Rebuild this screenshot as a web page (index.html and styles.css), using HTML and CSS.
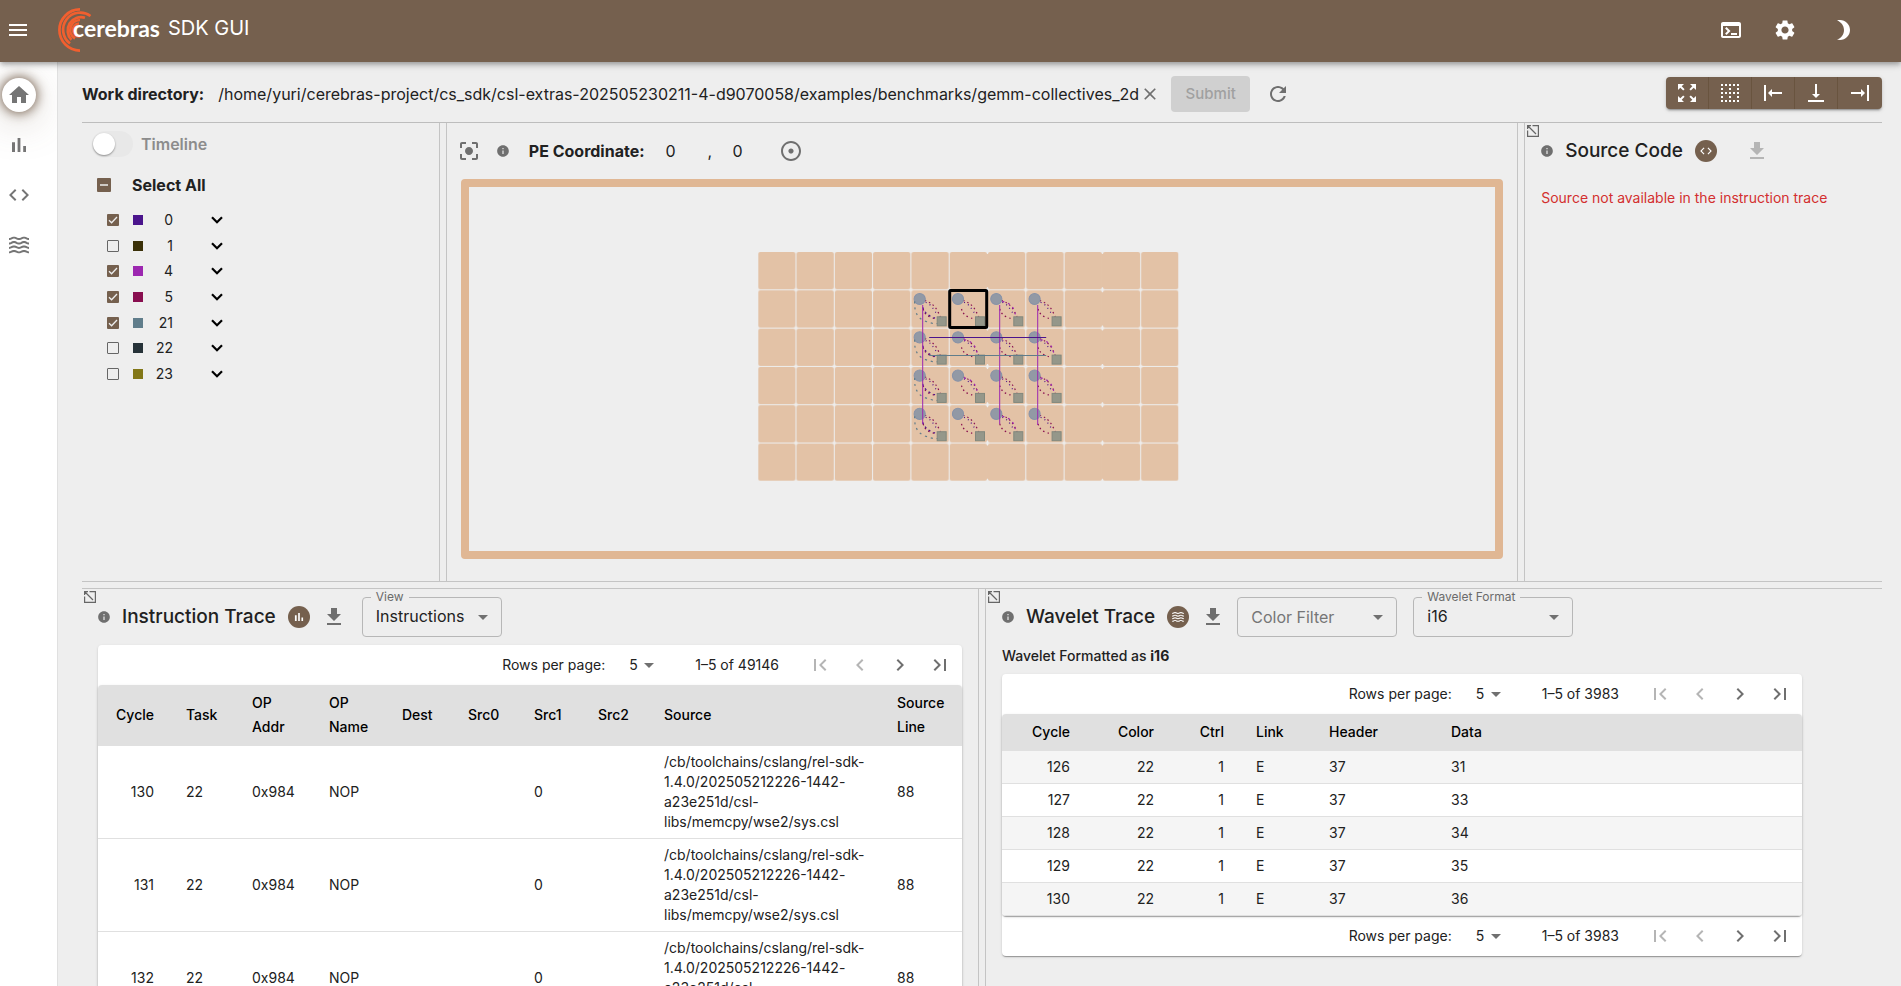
FILE: index.html
```html
<!DOCTYPE html>
<html lang="en">
<head>
<meta charset="utf-8">
<title>Cerebras SDK GUI</title>
<link rel="stylesheet" href="styles.css">
</head>
<body>
<svg class="defs" aria-hidden="true">
  <defs>
    <symbol id="i-menu" viewBox="0 0 24 24"><path d="M3 18h18v-2H3v2zm0-5h18v-2H3v2zm0-7v2h18V6H3z"/></symbol>
    <symbol id="i-home" viewBox="0 0 24 24"><path d="M10 20v-6h4v6h5v-8h3L12 3 2 12h3v8z"/></symbol>
    <symbol id="i-bars" viewBox="0 0 24 24"><path d="M5 9.2h3V19H5zM10.6 5h2.8v14h-2.8zm5.6 8H19v6h-2.8z"/></symbol>
    <symbol id="i-code" viewBox="0 0 24 24"><path d="M9.4 16.6 4.8 12l4.6-4.6L8 6l-6 6 6 6 1.4-1.4zm5.2 0 4.6-4.6-4.6-4.6L16 6l6 6-6 6-1.4-1.4z"/></symbol>
    <path id="wave" d="M17 16.99c-1.35 0-2.2.42-2.95.8-.65.33-1.18.6-2.05.6-.9 0-1.4-.25-2.05-.6-.75-.38-1.57-.8-2.95-.8s-2.2.42-2.95.8c-.65.33-1.17.6-2.05.6v1.95c1.35 0 2.2-.42 2.95-.8.65-.33 1.17-.6 2.05-.6s1.4.25 2.05.6c.75.38 1.57.8 2.95.8s2.2-.42 2.95-.8c.65-.33 1.18-.6 2.05-.6.9 0 1.4.25 2.05.6.75.38 1.58.8 2.95.8v-1.95c-.9 0-1.4-.25-2.05-.6-.75-.38-1.6-.8-2.95-.8z"/>
    <symbol id="i-waves" viewBox="0 0 24 24"><use href="#wave"/><use href="#wave" y="-4.45"/><use href="#wave" y="-8.9"/><use href="#wave" y="-13.35"/></symbol>
    <symbol id="i-terminal" viewBox="0 0 24 24"><path d="M20 4H4c-1.11 0-2 .9-2 2v12c0 1.1.89 2 2 2h16c1.1 0 2-.9 2-2V6c0-1.1-.89-2-2-2zm0 14H4V8h16v10zm-2-1h-6v-2h6v2zM7.5 17l-1.41-1.41L8.67 13l-2.59-2.59L7.5 9l4 4-4 4z"/></symbol>
    <symbol id="i-gear" viewBox="0 0 24 24"><path d="M19.14 12.94c.04-.3.06-.61.06-.94 0-.32-.02-.64-.07-.94l2.03-1.58c.18-.14.23-.41.12-.61l-1.92-3.32c-.12-.22-.37-.29-.59-.22l-2.39.96c-.5-.38-1.03-.7-1.62-.94l-.36-2.54c-.04-.24-.24-.41-.48-.41h-3.84c-.24 0-.43.17-.47.41l-.36 2.54c-.59.24-1.13.57-1.62.94l-2.39-.96c-.22-.08-.47 0-.59.22L2.74 8.87c-.12.21-.08.47.12.61l2.03 1.58c-.05.3-.09.63-.09.94s.02.64.07.94l-2.03 1.58c-.18.14-.23.41-.12.61l1.92 3.32c.12.22.37.29.59.22l2.39-.96c.5.38 1.03.7 1.62.94l.36 2.54c.05.24.24.41.48.41h3.84c.24 0 .44-.17.47-.41l.36-2.54c.59-.24 1.13-.56 1.62-.94l2.39.96c.22.08.47 0 .59-.22l1.92-3.32c.12-.22.07-.47-.12-.61l-2.01-1.58zM12 15.6c-1.98 0-3.6-1.62-3.6-3.6s1.62-3.6 3.6-3.6 3.6 1.62 3.6 3.6-1.62 3.6-3.6 3.6z"/></symbol>
    <symbol id="i-moon" viewBox="0 0 24 24"><path d="M9 2c-1.05 0-2.05.16-3 .46 4.06 1.27 7 5.06 7 9.54 0 4.48-2.94 8.27-7 9.54.95.3 1.95.46 3 .46 5.52 0 10-4.48 10-10S14.52 2 9 2z"/></symbol>
    <symbol id="i-expand" viewBox="0 0 24 24"><path d="M15 3l2.3 2.3-2.89 2.87 1.42 1.42L18.7 6.7 21 9V3zM3 9l2.3-2.3 2.87 2.89 1.42-1.42L6.7 5.3 9 3H3zm6 12l-2.3-2.3 2.89-2.87-1.42-1.42L5.3 17.3 3 15v6zm12-6l-2.3 2.3-2.87-2.89-1.42 1.42 2.89 2.87L15 21h6z"/></symbol>
    <symbol id="i-grid" viewBox="0 0 24 24"><path d="M7 5h2V3H7v2zm0 8h2v-2H7v2zm0 8h2v-2H7v2zm4-4h2v-2h-2v2zm0 4h2v-2h-2v2zm-8 0h2v-2H3v2zm0-4h2v-2H3v2zm0-4h2v-2H3v2zm0-4h2V7H3v2zm0-4h2V3H3v2zm8 8h2v-2h-2v2zm8 4h2v-2h-2v2zm0-4h2v-2h-2v2zm0 8h2v-2h-2v2zm0-12h2V7h-2v2zm-8 0h2V7h-2v2zm8-6v2h2V3h-2zm-8 2h2V3h-2v2zm4 16h2v-2h-2v2zm0-8h2v-2h-2v2zm0-8h2V3h-2v2z"/></symbol>
    <symbol id="i-bottom" viewBox="0 0 24 24"><path d="M16 13h-3V3h-2v10H8l4 4 4-4zM4 19v2h16v-2H4z"/></symbol>
    <symbol id="i-left" viewBox="0 0 24 24"><path transform="rotate(90 12 12)" d="M16 13h-3V3h-2v10H8l4 4 4-4zM4 19v2h16v-2H4z"/></symbol>
    <symbol id="i-right" viewBox="0 0 24 24"><path transform="rotate(-90 12 12)" d="M16 13h-3V3h-2v10H8l4 4 4-4zM4 19v2h16v-2H4z"/></symbol>
    <symbol id="i-focus" viewBox="0 0 24 24"><path d="M12 8c-2.21 0-4 1.79-4 4s1.79 4 4 4 4-1.79 4-4-1.79-4-4-4zm-7 7H3v4c0 1.1.9 2 2 2h4v-2H5v-4zM5 5h4V3H5c-1.1 0-2 .9-2 2v4h2V5zm14-2h-4v2h4v4h2V5c0-1.1-.9-2-2-2zm0 16h-4v2h4c1.1 0 2-.9 2-2v-4h-2v4z"/></symbol>
    <symbol id="i-info" viewBox="0 0 24 24"><path d="M12 2C6.48 2 2 6.48 2 12s4.48 10 10 10 10-4.48 10-10S17.52 2 12 2zm1 15h-2v-6h2v6zm0-8h-2V7h2v2z"/></symbol>
    <symbol id="i-target" viewBox="0 0 24 24"><path d="M12 2C6.49 2 2 6.49 2 12s4.49 10 10 10 10-4.49 10-10S17.51 2 12 2zm0 18c-4.41 0-8-3.59-8-8s3.59-8 8-8 8 3.59 8 8-3.59 8-8 8zm2.6-8c0 1.44-1.16 2.6-2.6 2.6s-2.6-1.16-2.6-2.6 1.16-2.6 2.6-2.6 2.6 1.16 2.6 2.6z"/></symbol>
    <symbol id="i-refresh" viewBox="0 0 24 24"><path d="M17.65 6.35C16.2 4.9 14.21 4 12 4c-4.42 0-7.99 3.58-7.99 8s3.57 8 7.99 8c3.73 0 6.84-2.55 7.73-6h-2.08c-.82 2.33-3.04 4-5.65 4-3.31 0-6-2.69-6-6s2.69-6 6-6c1.66 0 3.14.69 4.22 1.78L13 11h7V4l-2.35 2.35z"/></symbol>
    <symbol id="i-close" viewBox="0 0 24 24"><path d="M19 6.41 17.59 5 12 10.59 6.41 5 5 6.41 10.59 12 5 17.59 6.41 19 12 13.41 17.59 19 19 17.59 13.41 12z"/></symbol>
    <symbol id="i-download" viewBox="0 0 24 24"><path d="M5 20h14v-2H5v2zM19 9h-4V3H9v6H5l7 7 7-7z"/></symbol>
    <symbol id="i-first" viewBox="0 0 24 24"><path d="M18.41 16.59 13.82 12l4.59-4.59L17 6l-6 6 6 6zM6 6h2v12H6z"/></symbol>
    <symbol id="i-last" viewBox="0 0 24 24"><path d="M5.59 7.41 10.18 12l-4.59 4.59L7 18l6-6-6-6zM16 6h2v12h-2z"/></symbol>
    <symbol id="i-prev" viewBox="0 0 24 24"><path d="M15.41 16.59 10.83 12l4.58-4.59L14 6l-6 6 6 6z"/></symbol>
    <symbol id="i-next" viewBox="0 0 24 24"><path d="M8.59 16.59 13.17 12 8.59 7.41 10 6l6 6-6 6z"/></symbol>
    <symbol id="i-down" viewBox="0 0 12 8"><path d="M1 1.2 6 6.2l5-5" fill="none" stroke="#000" stroke-width="2.2"/></symbol>
    <symbol id="i-pop" viewBox="0 0 12 12"><path d="M5.5.6h5.9v10.8H.6V5.5M1 1l8 8M.6 4V.6H4" fill="none" stroke="currentColor" stroke-width="1.2"/></symbol>
    <pattern id="cells" width="38.3" height="38.3" patternUnits="userSpaceOnUse"><rect width="37.3" height="37.3" rx="2" fill="#e3c2a6"/></pattern>
    <g id="pe">
      <path d="M14 10Q23 13 27 21T29 26" stroke="#880e4f"/>
      <path d="M12 16Q13 24 19 26.500T26 28" stroke="#880e4f" stroke-dashoffset="2"/>
      <path d="M15 12Q20 14 23 19T28 24" stroke="#4a148c" stroke-dasharray="1 3.500"/>
      <circle cx="9" cy="8.700" r="5.600" fill="#9299a5" stroke="#8792a8" stroke-width="1" stroke-dasharray="none"/>
      <rect x="26.500" y="26.500" width="9" height="9" fill="#95978a" stroke="#82887d" stroke-width="1" stroke-dasharray="none"/>
    </g>
    <g id="pe-b"><use href="#pe"/><path d="M15 11Q26 13 28 24" stroke="#9c27b0" stroke-dasharray="2 4"/></g>
    <g id="pe-c"><use href="#pe"/><path d="M4 11Q3 27 15 31T26 33" stroke="#607d8b" stroke-dasharray="2 4"/><path d="M12 17Q14 23 20 26T26 28" stroke="#4a148c" stroke-dasharray="2 3"/></g>
  </defs>
</svg>

<header class="topbar">
  <button class="icon-btn menu-btn" aria-label="Menu"><svg class="ic"><use href="#i-menu"/></svg></button>
  <div class="brand">
    <svg class="brand-mark" viewBox="0 0 36 46" fill="none" stroke="#f15f2f" stroke-width="2.7">
      <path d="M23 2.400A20.500 20.500 0 0 0 23 43.600"/>
      <path d="M33.500 9A17 17 0 1 0 13 36.500"/>
      <path d="M28 10.800A13.300 13.300 0 0 0 14.500 32.800"/>
      <path d="M23 13A10 10 0 0 0 18 31.500"/>
      <path d="M22 16.500A6.500 6.500 0 0 0 23 29.500"/>
    </svg>
    <span class="brand-name">cerebras</span>
  </div>
  <h1 class="app-title">SDK GUI</h1>
  <div class="top-actions">
    <button class="icon-btn" aria-label="Terminal"><svg class="ic"><use href="#i-terminal"/></svg></button>
    <button class="icon-btn" aria-label="Settings"><svg class="ic"><use href="#i-gear"/></svg></button>
    <button class="icon-btn theme-btn" aria-label="Dark mode"><svg class="ic"><use href="#i-moon"/></svg></button>
  </div>
</header>

<div class="shell">
  <nav class="rail">
    <a class="rail-link active" href="#home" aria-label="Home"><svg class="ic"><use href="#i-home"/></svg></a>
    <a class="rail-link" href="#instructions" aria-label="Instruction trace"><svg class="ic"><use href="#i-bars"/></svg></a>
    <a class="rail-link" href="#source" aria-label="Source code"><svg class="ic"><use href="#i-code"/></svg></a>
    <a class="rail-link" href="#wavelets" aria-label="Wavelet trace"><svg class="ic"><use href="#i-waves"/></svg></a>
  </nav>

  <main class="main">
    <form class="workbar">
      <label class="strong" for="workdir">Work directory:</label>
      <input class="plain-input workdir" id="workdir" type="text" value="/home/yuri/cerebras-project/cs_sdk/csl-extras-202505230211-4-d9070058/examples/benchmarks/gemm-collectives_2d">
      <button class="icon-btn" type="button" aria-label="Clear"><svg class="ic ic-md"><use href="#i-close"/></svg></button>
      <button class="submit" type="submit" disabled>Submit</button>
      <button class="icon-btn" type="button" aria-label="Reload"><svg class="ic"><use href="#i-refresh"/></svg></button>
      <div class="btn-group">
        <button type="button" aria-label="Expand"><svg class="ic"><use href="#i-expand"/></svg></button>
        <button type="button" aria-label="Grid"><svg class="ic"><use href="#i-grid"/></svg></button>
        <button type="button" aria-label="Collapse left"><svg class="ic"><use href="#i-left"/></svg></button>
        <button type="button" aria-label="Collapse bottom"><svg class="ic"><use href="#i-bottom"/></svg></button>
        <button type="button" aria-label="Collapse right"><svg class="ic"><use href="#i-right"/></svg></button>
      </div>
    </form>

    <div class="panes">
      <div class="row row-top">
        <section class="pane pane-colors">
          <label class="switch-row"><input class="switch" type="checkbox" disabled>Timeline</label>
          <label class="select-all"><input class="check check-lg mixed" type="checkbox">Select All</label>
          <ul class="color-list">
            <li><label><input class="check" type="checkbox" checked><span class="swatch" style="background:#4a148c"></span><span class="num">0</span></label><button class="icon-btn" aria-label="Expand 0"><svg class="chev"><use href="#i-down"/></svg></button></li>
            <li><label><input class="check" type="checkbox"><span class="swatch" style="background:#3a3008"></span><span class="num">1</span></label><button class="icon-btn" aria-label="Expand 1"><svg class="chev"><use href="#i-down"/></svg></button></li>
            <li><label><input class="check" type="checkbox" checked><span class="swatch" style="background:#9c27b0"></span><span class="num">4</span></label><button class="icon-btn" aria-label="Expand 4"><svg class="chev"><use href="#i-down"/></svg></button></li>
            <li><label><input class="check" type="checkbox" checked><span class="swatch" style="background:#880e4f"></span><span class="num">5</span></label><button class="icon-btn" aria-label="Expand 5"><svg class="chev"><use href="#i-down"/></svg></button></li>
            <li><label><input class="check" type="checkbox" checked><span class="swatch" style="background:#607d8b"></span><span class="num">21</span></label><button class="icon-btn" aria-label="Expand 21"><svg class="chev"><use href="#i-down"/></svg></button></li>
            <li><label><input class="check" type="checkbox"><span class="swatch" style="background:#263238"></span><span class="num">22</span></label><button class="icon-btn" aria-label="Expand 22"><svg class="chev"><use href="#i-down"/></svg></button></li>
            <li><label><input class="check" type="checkbox"><span class="swatch" style="background:#827717"></span><span class="num">23</span></label><button class="icon-btn" aria-label="Expand 23"><svg class="chev"><use href="#i-down"/></svg></button></li>
          </ul>
        </section>
        <div class="split-v"></div>
        <section class="pane pane-fabric">
          <div class="pe-bar">
            <button class="icon-btn pe-center" aria-label="Center view"><svg class="ic"><use href="#i-focus"/></svg></button>
            <svg class="ic ic-xs"><use href="#i-info"/></svg>
            <label class="strong" for="pe-x">PE Coordinate:</label>
            <input class="plain-input coord" id="pe-x" type="text" value="0">
            <span class="comma">,</span>
            <input class="plain-input coord" type="text" value="0" aria-label="PE y coordinate">
            <button class="icon-btn pe-go" aria-label="Go to PE"><svg class="ic"><use href="#i-target"/></svg></button>
          </div>
          <div class="fabric">
            <svg viewBox="0 0 1026 364" fill="none" stroke-width="1">
              <g transform="translate(289 65)">
                <rect width="420.300" height="228.800" fill="url(#cells)"/>
                <path d="M229.300 2v228M344.200 2v228" stroke="#e3c2a6" stroke-width="2.400" stroke-dasharray="33.300 5"/>
                <g stroke-dasharray="1.500 3" stroke-width="1.200">
                  <use href="#pe-c" x="152.500" y="38.300"/><use href="#pe" x="190.800" y="38.300"/><use href="#pe-b" x="229.100" y="38.300"/><use href="#pe" x="267.400" y="38.300"/>
                  <use href="#pe-c" x="152.500" y="76.600"/><use href="#pe-b" x="190.800" y="76.600"/><use href="#pe" x="229.100" y="76.600"/><use href="#pe-b" x="267.400" y="76.600"/>
                  <use href="#pe-c" x="152.500" y="114.900"/><use href="#pe-b" x="190.800" y="114.900"/><use href="#pe" x="229.100" y="114.900"/><use href="#pe-b" x="267.400" y="114.900"/>
                  <use href="#pe-c" x="152.500" y="153.200"/><use href="#pe" x="190.800" y="153.200"/><use href="#pe-b" x="229.100" y="153.200"/><use href="#pe" x="267.400" y="153.200"/>
                </g>
                <path d="M164.500 53v119M241.500 53v119M279.500 53v120" stroke="#9c27b0"/>
                <path d="M171 85.500h117" stroke="#4a148c"/>
                <path d="M171 103.500h117" stroke="#607d8b"/>
                <rect x="191.500" y="38.500" width="37" height="37" rx="1" stroke="#000" stroke-width="3"/>
              </g>
            </svg>
          </div>
        </section>
        <div class="split-v"></div>
        <section class="pane pane-source">
          <button class="pop" aria-label="Detach"><svg><use href="#i-pop"/></svg></button>
          <div class="pane-head">
            <svg class="ic ic-xs"><use href="#i-info"/></svg>
            <h2>Source Code</h2>
            <span class="badge"><svg><use href="#i-code"/></svg></span>
            <button class="icon-btn dl-far" aria-label="Download source" disabled><svg class="ic"><use href="#i-download"/></svg></button>
          </div>
          <p class="error">Source not available in the instruction trace</p>
        </section>
      </div>
      <div class="split-h"></div>
      <div class="row row-bottom">
        <section class="pane pane-instr">
          <button class="pop" aria-label="Detach"><svg><use href="#i-pop"/></svg></button>
          <div class="pane-head">
            <svg class="ic ic-xs"><use href="#i-info"/></svg>
            <h2>Instruction Trace</h2>
            <span class="badge"><svg><use href="#i-bars"/></svg></span>
            <button class="icon-btn dl" aria-label="Download instruction trace"><svg class="ic"><use href="#i-download"/></svg></button>
            <div class="field field-view"><label for="view">View</label><select id="view"><option>Instructions</option></select></div>
          </div>
          <div class="card">
            <div class="pager">
              <label for="rpp1">Rows per page:</label><select id="rpp1"><option>5</option></select><span class="range">1–5 of 49146</span>
              <button class="icon-btn" aria-label="First page" disabled><svg class="ic"><use href="#i-first"/></svg></button><button class="icon-btn" aria-label="Previous page" disabled><svg class="ic"><use href="#i-prev"/></svg></button><button class="icon-btn" aria-label="Next page"><svg class="ic"><use href="#i-next"/></svg></button><button class="icon-btn" aria-label="Last page"><svg class="ic"><use href="#i-last"/></svg></button>
            </div>
            <div class="sheet">
            <table>
              <colgroup><col class="w72"><col class="w66"><col class="w77"><col class="w73"><col class="w66"><col class="w66"><col class="w64"><col class="w66"><col><col class="w81"></colgroup>
              <thead><tr><th class="r">Cycle</th><th>Task</th><th>OP Addr</th><th>OP Name</th><th>Dest</th><th>Src0</th><th>Src1</th><th>Src2</th><th>Source</th><th>Source Line</th></tr></thead>
              <tbody>
                <tr><td class="r">130</td><td>22</td><td>0x984</td><td>NOP</td><td></td><td></td><td>0</td><td></td><td>/cb/toolchains/cslang/rel-sdk-1.4.0/202505212226-1442-a23e251d/csl-libs/memcpy/wse2/sys.csl</td><td>88</td></tr>
                <tr><td class="r">131</td><td>22</td><td>0x984</td><td>NOP</td><td></td><td></td><td>0</td><td></td><td>/cb/toolchains/cslang/rel-sdk-1.4.0/202505212226-1442-a23e251d/csl-libs/memcpy/wse2/sys.csl</td><td>88</td></tr>
                <tr><td class="r">132</td><td>22</td><td>0x984</td><td>NOP</td><td></td><td></td><td>0</td><td></td><td>/cb/toolchains/cslang/rel-sdk-1.4.0/202505212226-1442-a23e251d/csl-libs/memcpy/wse2/sys.csl</td><td>88</td></tr>
              </tbody>
            </table>
            </div>
          </div>
        </section>
        <div class="split-v"></div>
        <section class="pane pane-wave">
          <button class="pop" aria-label="Detach"><svg><use href="#i-pop"/></svg></button>
          <div class="pane-head">
            <svg class="ic ic-xs"><use href="#i-info"/></svg>
            <h2>Wavelet Trace</h2>
            <span class="badge"><svg><use href="#i-waves"/></svg></span>
            <button class="icon-btn dl" aria-label="Download wavelet trace"><svg class="ic"><use href="#i-download"/></svg></button>
            <div class="field field-wide"><select class="placeholder" aria-label="Color Filter"><option>Color Filter</option></select></div>
            <div class="field field-wide"><label for="fmt">Wavelet Format</label><select id="fmt"><option>i16</option></select></div>
          </div>
          <p class="format-note">Wavelet Formatted as <b>i16</b></p>
          <div class="card card-wave">
            <div class="pager">
              <label for="rpp2">Rows per page:</label><select id="rpp2"><option>5</option></select><span class="range">1–5 of 3983</span>
              <button class="icon-btn" aria-label="First page" disabled><svg class="ic"><use href="#i-first"/></svg></button><button class="icon-btn" aria-label="Previous page" disabled><svg class="ic"><use href="#i-prev"/></svg></button><button class="icon-btn" aria-label="Next page"><svg class="ic"><use href="#i-next"/></svg></button><button class="icon-btn" aria-label="Last page"><svg class="ic"><use href="#i-last"/></svg></button>
            </div>
            <div class="sheet">
            <table class="striped">
              <colgroup><col class="w84"><col class="w84"><col class="w70"><col class="w73"><col class="w122"><col></colgroup>
              <thead><tr><th class="r">Cycle</th><th class="r">Color</th><th class="r">Ctrl</th><th>Link</th><th>Header</th><th>Data</th></tr></thead>
              <tbody>
                <tr><td class="r">126</td><td class="r">22</td><td class="r">1</td><td>E</td><td>37</td><td>31</td></tr>
                <tr><td class="r">127</td><td class="r">22</td><td class="r">1</td><td>E</td><td>37</td><td>33</td></tr>
                <tr><td class="r">128</td><td class="r">22</td><td class="r">1</td><td>E</td><td>37</td><td>34</td></tr>
                <tr><td class="r">129</td><td class="r">22</td><td class="r">1</td><td>E</td><td>37</td><td>35</td></tr>
                <tr><td class="r">130</td><td class="r">22</td><td class="r">1</td><td>E</td><td>37</td><td>36</td></tr>
              </tbody>
            </table>
            </div>
            <div class="pager">
              <label for="rpp3">Rows per page:</label><select id="rpp3"><option>5</option></select><span class="range">1–5 of 3983</span>
              <button class="icon-btn" aria-label="First page" disabled><svg class="ic"><use href="#i-first"/></svg></button><button class="icon-btn" aria-label="Previous page" disabled><svg class="ic"><use href="#i-prev"/></svg></button><button class="icon-btn" aria-label="Next page"><svg class="ic"><use href="#i-next"/></svg></button><button class="icon-btn" aria-label="Last page"><svg class="ic"><use href="#i-last"/></svg></button>
            </div>
          </div>
        </section>
      </div>
    </div>
  </main>
</div>
</body>
</html>
```
FILE: styles.css
```css
:root {
  --brown: #75604e;
  --bg: #eeeeee;
  --line: #bdbdbd;
  --text: #212121;
  --muted: #6f6f6f;
}
* { box-sizing: border-box; }
html, body { height: 100%; }
body {
  margin: 0;
  display: flex;
  flex-direction: column;
  overflow: hidden;
  background: var(--bg);
  color: var(--text);
  font-family: Inter, Roboto, sans-serif;
  font-size: 14px;
  line-height: 20px;
}
h1, h2, p, ul { margin: 0; padding: 0; font-weight: 400; }
button, input, select { font: inherit; color: inherit; }
button { padding: 0; border: 0; background: none; }
.defs { position: absolute; width: 0; height: 0; }
.ic { width: 24px; height: 24px; fill: currentColor; display: block; flex: none; }
.ic-md { width: 20px; height: 20px; }
.ic-xs { width: 14px; height: 14px; color: var(--muted); }
.icon-btn { display: flex; align-items: center; justify-content: center; color: var(--muted); }
.icon-btn:disabled { color: #b5b5b5; }
.strong { font-size: 16px; font-weight: 700; }

.topbar {
  position: relative;
  z-index: 2;
  flex: none;
  display: flex;
  align-items: center;
  height: 62px;
  padding: 0 46px 2px 6px;
  background: var(--brown);
  color: #fff;
  box-shadow: 0 2px 4px -1px rgba(0,0,0,.2), 0 4px 5px rgba(0,0,0,.14), 0 1px 10px rgba(0,0,0,.12);
}
.topbar .icon-btn { color: #fff; }
.brand { display: flex; align-items: center; margin-left: 27px; }
.brand-mark { width: 36px; height: 46px; }
.brand-name {
  margin-left: -20px;
  margin-top: -4px;
  font-family: Lato, sans-serif;
  font-size: 23px;
  font-weight: 700;
  line-height: 28px;
}
.app-title { margin-left: 8px; margin-bottom: 4px; font-size: 20px; line-height: 28px; }
.top-actions { display: flex; gap: 30px; margin-left: auto; }
.theme-btn { margin-left: 4px; }

.shell { flex: 1; display: flex; min-height: 0; }
.rail {
  flex: none;
  width: 58px;
  display: flex;
  flex-direction: column;
  gap: 16px;
  padding: 16px 2px;
  background: #fff;
  border-right: 1px solid #e0e0e0;
  overflow: hidden;
}
.rail-link {
  width: 34px;
  height: 34px;
  display: flex;
  align-items: center;
  justify-content: center;
  border-radius: 50%;
  color: #757575;
}
.rail-link.active { box-shadow: 0 0 12px 1px var(--brown), 0 8px 40px rgba(117,96,78,.35); background: #fff; }

.main {
  flex: 1;
  min-width: 0;
  display: flex;
  flex-direction: column;
  padding: 0 19px 0 24px;
}
.workbar { flex: none; display: flex; align-items: center; height: 60px; padding-top: 4px; }
.plain-input { border: 0; padding: 0; background: none; outline: 0; font-size: 16px; }
.workdir { flex: 0 1 922px; min-width: 0; margin-left: 14px; }
.submit {
  width: 79px;
  height: 36px;
  margin: 0 16px 0 11px;
  border-radius: 4px;
  background: #d0d0d0;
  color: #a0a0a0;
  font-size: 15px;
  font-weight: 500;
}
.btn-group {
  display: flex;
  margin-left: auto;
  margin-bottom: 2px;
  border-radius: 4px;
  background: var(--brown);
  color: #fff;
  box-shadow: 0 3px 1px -2px rgba(0,0,0,.2), 0 2px 2px rgba(0,0,0,.14), 0 1px 5px rgba(0,0,0,.12);
}
.btn-group button {
  display: flex;
  align-items: center;
  justify-content: center;
  width: 43px;
  height: 32px;
  color: #fff;
  border-right: 1px solid #69543f;
}
.btn-group button:last-child { width: 44px; border-right: 0; }

.panes {
  flex: 1;
  min-height: 0;
  display: grid;
  grid-template-rows: minmax(0, 15fr) 8px minmax(0, 13fr);
  border-top: 1px solid var(--line);
}
.row { display: grid; min-width: 0; min-height: 0; }
.row-top { grid-template-columns: minmax(0, 1fr) 8px minmax(0, 3fr) 8px minmax(0, 1fr); }
.row-bottom { grid-template-columns: minmax(0, 1fr) 8px minmax(0, 1fr); }
.split-v { border: solid #c4c4c4; border-width: 0 1px; }
.split-h { border: solid #c4c4c4; border-width: 1px 0; }
.pane { position: relative; min-width: 0; overflow: hidden; padding: 8px 16px 0; }
.pane-fabric { display: flex; flex-direction: column; padding: 8px 14px 22px; }

.switch-row { display: flex; align-items: center; gap: 8px; margin-left: -6px; color: #8c8c8c; font-size: 16px; font-weight: 600; }
.switch {
  appearance: none;
  display: flex;
  align-items: center;
  width: 41px;
  height: 26px;
  margin: 0;
  padding-left: 1px;
  border-radius: 13px;
  background: #e8e8e8;
}
.switch::before { content: ""; width: 22px; height: 22px; border-radius: 50%; background: #fff; box-shadow: 0 1px 2px rgba(0,0,0,.4); }
.select-all { display: flex; align-items: center; gap: 21px; height: 24px; margin: 16px 0 10px; font-size: 16px; font-weight: 700; }
.check {
  appearance: none;
  flex: none;
  width: 12px;
  height: 12px;
  margin: 0;
  border: 1px solid #666;
  border-radius: 1px;
}
.check:checked {
  border: 0;
  background: var(--brown) url("data:image/svg+xml,%3Csvg xmlns='http://www.w3.org/2000/svg' viewBox='0 0 12 12'%3E%3Cpath d='M2 6.200l2.600 2.600L10 3' fill='none' stroke='%23eee' stroke-width='1.300'/%3E%3C/svg%3E");
}
.check-lg { width: 14px; height: 14px; margin-left: -1px; }
.mixed {
  border: 0;
  background: var(--brown) url("data:image/svg+xml,%3Csvg xmlns='http://www.w3.org/2000/svg' viewBox='0 0 14 14'%3E%3Cpath d='M3 7h8' stroke='%23eee' stroke-width='1.500'/%3E%3C/svg%3E");
}
.color-list { display: grid; grid-auto-rows: 1fr; height: 180px; padding-left: 9px; list-style: none; }
.color-list li { display: flex; align-items: center; gap: 38px; }
.color-list label { display: flex; align-items: center; }
.swatch { width: 10px; height: 10px; margin-left: 14px; }
.num { width: 30px; text-align: right; }
.chev { width: 12px; height: 8px; }

.pe-bar { flex: none; display: flex; align-items: center; height: 40px; margin-bottom: 8px; }
.pe-center { margin: 0 15px 0 -4px; }
.pe-bar .strong { margin-left: 19px; }
.coord { flex: none; width: 42px; margin-left: 21px; }
.comma { width: 4px; font-size: 16px; }
.pe-go { margin-left: 4px; }
.fabric { flex: 1; min-height: 0; display: flex; border: 8px solid #e0b794; border-radius: 4px; }
.fabric svg { width: 100%; height: 100%; }

.pop { position: absolute; left: 2px; top: 2px; color: #666; }
.pop svg { display: block; width: 12px; height: 12px; }
.pane-head { display: flex; align-items: center; height: 40px; margin-left: -1px; }
.pane-head h2 { margin-left: 11px; font-size: 19px; font-weight: 500; line-height: 28px; white-space: nowrap; }
.badge {
  flex: none;
  display: flex;
  align-items: center;
  justify-content: center;
  width: 22px;
  height: 22px;
  margin-left: 12px;
  border-radius: 50%;
  background: var(--brown);
}
.badge svg { width: 14px; height: 14px; fill: #fff; }
.dl { margin: 0 16px 0 12px; }
.pane-wave .dl { margin-right: 12px; }
.dl-far { margin-left: 28px; }
.error { margin-top: 17px; color: #d32f2f; }

.field { position: relative; flex: none; }
.field + .field { margin-left: 16px; }
.field-view { width: 140px; }
.field-wide { width: 160px; }
.field label {
  position: absolute;
  left: 9px;
  top: -8px;
  padding: 0 5px;
  background: var(--bg);
  color: #6b6b6b;
  font-size: 12px;
  line-height: 16px;
}
.field select {
  appearance: none;
  display: block;
  width: 100%;
  height: 40px;
  padding: 0 13px 2px;
  border: 1px solid #b7b7b7;
  border-radius: 4px;
  font-size: 16px;
  background: url("data:image/svg+xml,%3Csvg xmlns='http://www.w3.org/2000/svg' viewBox='0 0 24 24' fill='%23707070'%3E%3Cpath d='m7 10 5 5 5-5z'/%3E%3C/svg%3E") right 6px center / 24px no-repeat;
}
.field .placeholder { color: #767676; padding-bottom: 0; }

.card { margin-top: 8px; border-radius: 4px; background: #fff; box-shadow: 0 2px 1px -1px rgba(0,0,0,.2), 0 1px 1px rgba(0,0,0,.14), 0 1px 3px rgba(0,0,0,.12); }
.card-wave { max-width: 800px; }
.pager { display: flex; align-items: center; justify-content: flex-end; height: 40px; padding-right: 2px; }
.pager select {
  appearance: none;
  width: 40px;
  height: 24px;
  margin-left: 16px;
  padding: 0 0 0 8px;
  border: 0;
  background: url("data:image/svg+xml,%3Csvg xmlns='http://www.w3.org/2000/svg' viewBox='0 0 24 24' fill='%23707070'%3E%3Cpath d='m7 10 5 5 5-5z'/%3E%3C/svg%3E") right 0 center / 24px no-repeat;
}
.pager .range { margin: 0 21px 0 34px; }
.pager .icon-btn { width: 40px; height: 40px; }
.format-note { margin-top: 9px; font-weight: 500; }
.format-note b { font-weight: 700; }
.sheet { border-radius: 4px; overflow: hidden; box-shadow: 0 2px 1px -1px rgba(0,0,0,.2), 0 1px 1px rgba(0,0,0,.14), 0 1px 3px rgba(0,0,0,.12); }
table { width: 100%; table-layout: fixed; border-collapse: separate; border-spacing: 0; }
th, td { padding: 6px 16px; border-bottom: 1px solid #e0e0e0; text-align: left; }
th { background: #e0e0e0; color: #000; font-weight: 500; line-height: 24px; }
th.r, td.r { text-align: right; }
.striped tbody tr:nth-child(odd) { background: #f5f5f5; }
.w64 { width: 64px; }
.w66 { width: 66px; }
.w70 { width: 70px; }
.w72 { width: 72px; }
.w73 { width: 73px; }
.w77 { width: 77px; }
.w81 { width: 81px; }
.w84 { width: 84px; }
.w122 { width: 122px; }
```
